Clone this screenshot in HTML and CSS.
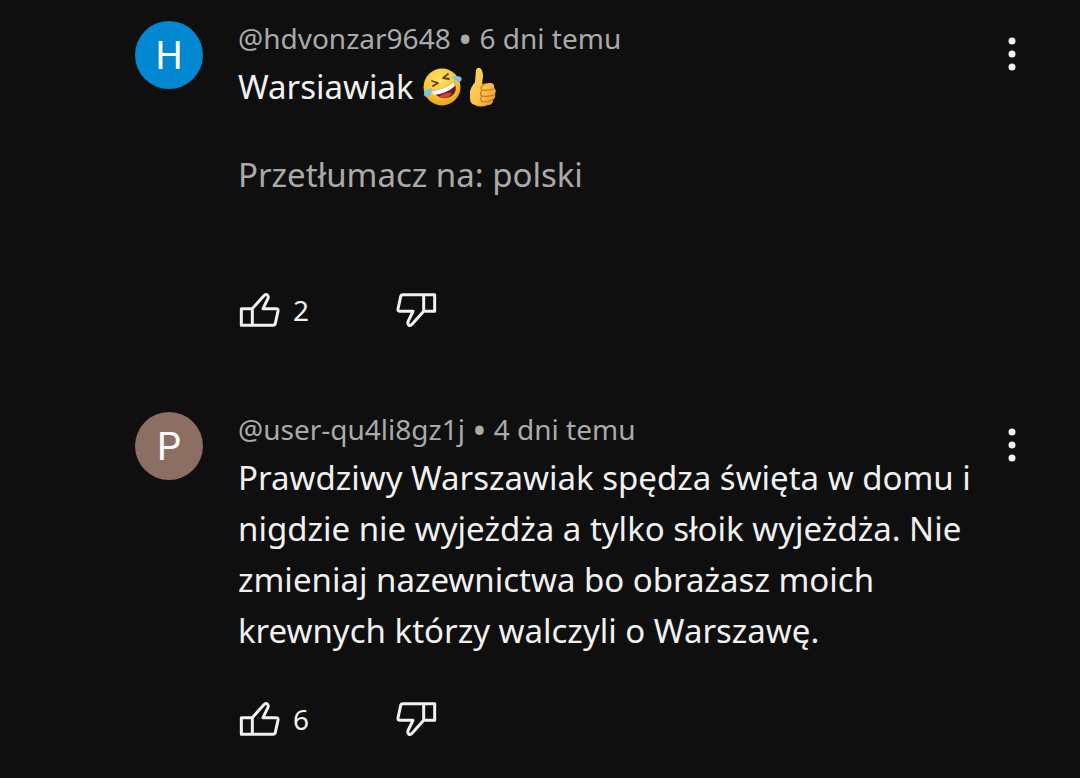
FILE: index.html
```html
<!DOCTYPE html>
<html lang="pl">
<head>
<meta charset="utf-8">
<title>Komentarze</title>
<link rel="stylesheet" href="styles.css">
</head>
<body>
<svg class="defs" aria-hidden="true">
  <symbol id="thumb" viewBox="24 33 132 114">
    <path d="M34 86H67V136H34ZM67 86L101 48Q107 41 112 45Q116 49 114 55L99 86H138Q145 86 144 93L136 130Q135 136 129 136H67" fill="none" stroke="currentColor" stroke-width="9" stroke-linejoin="round"/>
  </symbol>
  <symbol id="dots" viewBox="0 0 8 34">
    <circle cx="4" cy="4" r="3.5"/><circle cx="4" cy="17" r="3.5"/><circle cx="4" cy="30" r="3.5"/>
  </symbol>
</svg>
<main class="comments">
  <article class="comment">
    <div class="avatar avatar-blue">H</div>
    <div class="content">
      <header class="meta">@hdvonzar9648 <span class="bullet">•</span> 6 dni temu</header>
      <p class="text">Warsiawiak
        <svg class="emoji" viewBox="0 0 40 40" role="img" aria-label="Rotfl">
          <defs>
            <radialGradient id="face" cx=".45" cy=".3" r=".75"><stop offset="0" stop-color="#ffe36a"/><stop offset=".6" stop-color="#fcc52f"/><stop offset="1" stop-color="#ee9420"/></radialGradient>
          </defs>
          <circle cx="20" cy="20" r="18.5" fill="url(#face)"/>
          <path d="M10 14L16 16L11 19M21 11L26 7M21 11L27 12" fill="none" stroke="#663c12" stroke-width="1.8" stroke-linecap="round" stroke-linejoin="round"/>
          <path d="M10 24Q22 23 32 15Q37 25 28 30Q18 34 10 24Z" fill="#5b2019"/>
          <path d="M10 24Q22 23 32 15L33 19Q24 27 12 28Z" fill="#fff"/>
          <path d="M17 30Q22 25 30 26Q26 33 17 30Z" fill="#e33c38"/>
          <path d="M10 21Q1 23 2 28Q4 32 8 28Q10 26 10 21ZM30 10Q34 8 39 10Q41 14 37 15Q32 14 30 10Z" fill="#73c7ed"/>
        </svg><svg class="emoji" viewBox="0 0 40 40" role="img" aria-label="Kciuk w górę">
          <defs>
            <linearGradient id="hand" x1="0" y1="0" x2="1" y2="1"><stop offset="0" stop-color="#ffd45d"/><stop offset=".6" stop-color="#fbc04a"/><stop offset="1" stop-color="#e58d24"/></linearGradient>
          </defs>
          <path d="M8 24Q9 20 13 15L14 3Q15 0 18 1Q21 3 21 10L20 17L28 16Q33 16 32 21Q35 23 33 27Q34 31 31 33Q31 38 26 38Q18 41 13 38Q8 37 8 31Z" fill="url(#hand)"/>
          <path d="M23 17Q17 20 20 23Q25 24 31 22M20 23Q17 27 20 29Q26 30 32 28M20 29Q17 33 21 35Q26 35 30 33" fill="none" stroke="#c9741d" stroke-width="1.2" stroke-linecap="round"/>
        </svg></p>
      <button class="translate" type="button">Przetłumacz na: polski</button>
      <div class="actions">
        <button class="action" type="button" aria-label="Lubię to, 2"><svg class="thumb"><use href="#thumb"/></svg><span>2</span></button>
        <button class="action" type="button" aria-label="Nie lubię"><svg class="thumb thumb-down"><use href="#thumb"/></svg></button>
      </div>
    </div>
    <button class="menu" type="button" aria-label="Więcej"><svg class="dots"><use href="#dots"/></svg></button>
  </article>
  <article class="comment">
    <div class="avatar avatar-brown">P</div>
    <div class="content">
      <header class="meta">@user-qu4li8gz1j <span class="bullet">•</span> 4 dni temu</header>
      <p class="text">Prawdziwy Warszawiak spędza święta w domu i nigdzie nie wyjeżdża a tylko słoik wyjeżdża. Nie zmieniaj nazewnictwa bo obrażasz moich krewnych którzy walczyli o Warszawę.</p>
      <div class="actions">
        <button class="action" type="button" aria-label="Lubię to, 6"><svg class="thumb"><use href="#thumb"/></svg><span>6</span></button>
        <button class="action" type="button" aria-label="Nie lubię"><svg class="thumb thumb-down"><use href="#thumb"/></svg></button>
      </div>
    </div>
    <button class="menu" type="button" aria-label="Więcej"><svg class="dots"><use href="#dots"/></svg></button>
  </article>
</main>
</body>
</html>
```
FILE: styles.css
```css
* { box-sizing: border-box; }
body {
  margin: 0;
  background: #0f0f0f;
  color: #f1f1f1;
  font-family: "Noto Sans", sans-serif;
}
button {
  padding: 0;
  border: 0;
  background: none;
  color: inherit;
  font: inherit;
  cursor: pointer;
}
.defs { display: none; }
.comments {
  display: flex;
  flex-direction: column;
  gap: 78px;
  padding: 16px 56px 0 135px;
}
.comment { display: flex; align-items: flex-start; }
.avatar {
  display: grid;
  place-items: center;
  flex: none;
  width: 68px;
  height: 68px;
  margin: 5px 35px 0 0;
  padding-top: 2px;
  border-radius: 50%;
  color: #fff;
  font: 38px/66px Roboto, sans-serif;
}
.avatar-blue { background: #0288d1; }
.avatar-brown { background: #8d6e63; }
.content { flex: 1; min-width: 0; }
.meta {
  color: #aaa;
  font-size: 28px;
  line-height: 45px;
}
.bullet {
  font-size: 38px;
  line-height: 28px;
  vertical-align: -4px;
}
.text {
  margin: 0;
  font-size: 33px;
  line-height: 51px;
}
.emoji {
  width: 40px;
  height: 40px;
  vertical-align: -8px;
}
.translate {
  display: block;
  margin-top: 37px;
  color: #aaa;
  font-size: 33px;
  line-height: 51px;
}
.actions {
  display: flex;
  height: 38px;
  margin-top: 44px;
}
.translate + .actions { margin-top: 91px; }
.action {
  display: flex;
  align-items: center;
  gap: 11px;
  font-size: 28px;
  line-height: 38px;
}
.action + .action { margin-left: 85px; }
.thumb { width: 44px; height: 38px; }
.thumb-down { transform: rotate(180deg); }
.menu { margin: 21px 8px 0 0; }
.dots {
  display: block;
  width: 8px;
  height: 34px;
  fill: currentColor;
}
```
